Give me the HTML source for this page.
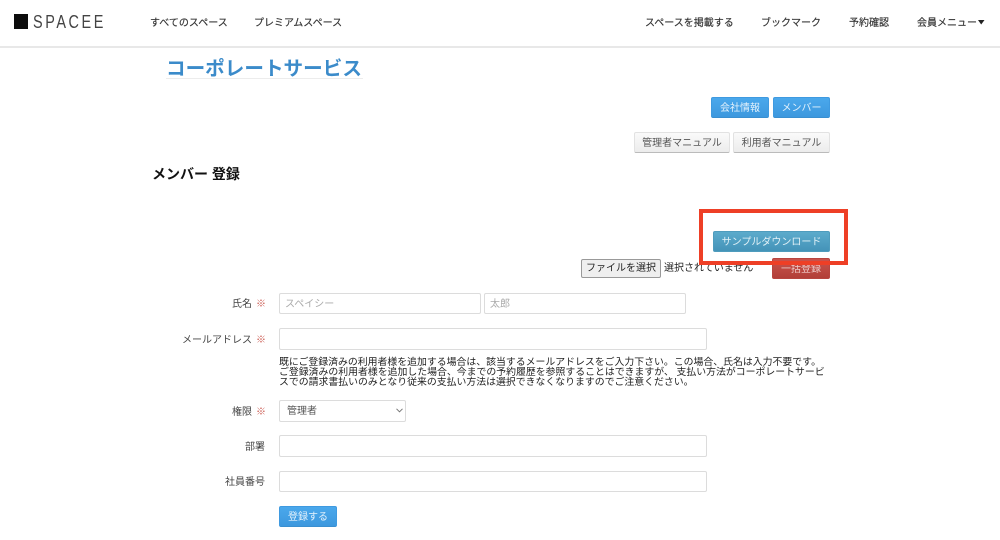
<!DOCTYPE html>
<html lang="ja">
<head>
<meta charset="utf-8">
<title>SPACEE</title>
<style>
html,body{margin:0;padding:0;background:#fff}
body{width:1000px;height:540px;position:relative;overflow:hidden;font-family:"Liberation Sans","Noto Sans CJK JP",sans-serif;color:#333;font-size:10px}
.a{position:absolute;white-space:nowrap}
.nav{top:17px;font-size:10px;line-height:14px;color:#333;-webkit-text-stroke:.15px #333}
.btn{position:absolute;box-sizing:border-box;text-align:center;border-radius:2px;font-size:10px;white-space:nowrap}
.blue{background:linear-gradient(#4aa8ec,#3d98de);color:#e4f2fc;border:1px solid #3f9ae0;border-bottom-color:#3a8fd0}
.gray{background:linear-gradient(#fafafa,#ececec);color:#555;border:1px solid #e2e2e2;border-bottom-color:#bbb}
.inp{position:absolute;box-sizing:border-box;background:#fff;border:1px solid #dcdcdc;border-radius:2px;color:#aaa;font-size:10px;padding-left:5px;white-space:nowrap}
.lab{position:absolute;text-align:right;right:735px;font-size:10px;line-height:14px;color:#444;white-space:nowrap}
.req{position:absolute;left:256px;font-size:10px;line-height:14px;color:#c9554c}
</style>
</head>
<body>
<div class="a" style="left:14px;top:14px;width:14px;height:15px;background:#0c0c0c"></div>
<div class="a" style="left:33px;top:11px;font-size:18.5px;line-height:22px;letter-spacing:3.3px;color:#444;transform:scaleX(.78);transform-origin:0 0">SPACEE</div>
<div class="a nav" style="left:150px">すべてのスペース</div>
<div class="a nav" style="left:254px">プレミアムスペース</div>
<div class="a nav" style="left:645px">スペースを掲載する</div>
<div class="a nav" style="left:761px">ブックマーク</div>
<div class="a nav" style="left:849px">予約確認</div>
<div class="a nav" style="left:917px">会員メニュー</div>
<svg class="a" style="left:978px;top:20px" width="7" height="5" viewBox="0 0 7 5"><path d="M0 0H6.5L3.2 4.5Z" fill="#222"/></svg>
<div class="a" style="left:0;top:46px;width:1000px;height:2px;background:#e8e8e8"></div>

<div class="a" style="left:166px;top:57px;font-size:19.6px;line-height:24px;font-weight:bold;color:#3b8bca">コーポレートサービス</div>
<div class="a" style="left:166px;top:78px;width:197px;height:1px;background:#ececec"></div>

<div class="btn blue" style="left:711px;top:97px;width:58px;height:21px;line-height:21px">会社情報</div>
<div class="btn blue" style="left:773px;top:97px;width:57px;height:21px;line-height:21px">メンバー</div>
<div class="btn gray" style="left:634px;top:132px;width:96px;height:21px;line-height:21px">管理者マニュアル</div>
<div class="btn gray" style="left:733px;top:132px;width:97px;height:21px;line-height:21px">利用者マニュアル</div>

<div class="a" style="left:152px;top:165px;font-size:14px;line-height:18px;font-weight:bold;color:#111">メンバー 登録</div>

<div class="btn" style="left:713px;top:231px;width:117px;height:21px;line-height:21px;background:linear-gradient(#5cabcc,#4493b8);color:#e2f1f7;border:1px solid #4f9cbd">サンプルダウンロード</div>
<div class="btn" style="left:772px;top:258px;width:58px;height:21px;line-height:21px;background:linear-gradient(#c9534c,#b23f39);color:#eec9c6;border:1px solid #b8453f">一括登録</div>
<div class="a" style="left:581px;top:259px;width:80px;height:19px;box-sizing:border-box;border:1px solid #999;border-radius:2px;background:#efefef;text-align:center;font-size:10px;line-height:18px;color:#222">ファイルを選択</div>
<div class="a" style="left:664px;top:262px;font-size:10px;line-height:14px;color:#222">選択されていません</div>
<div class="a" style="left:699px;top:209px;width:149px;height:56px;box-sizing:border-box;border:4px solid #ee3f26"></div>

<div class="lab" style="top:298px;right:748px">氏名</div><div class="req" style="top:298px">※</div>
<div class="inp" style="left:279px;top:293px;width:202px;height:21px;line-height:21px">スペイシー</div>
<div class="inp" style="left:484px;top:293px;width:202px;height:21px;line-height:21px">太郎</div>

<div class="lab" style="top:334px;right:748px">メールアドレス</div><div class="req" style="top:334px">※</div>
<div class="inp" style="left:279px;top:328px;width:428px;height:22px"></div>

<div class="a" style="left:279px;top:358px;font-size:9.9px;line-height:10px;color:#222">既にご登録済みの利用者様を追加する場合は、該当するメールアドレスをご入力下さい。この場合、氏名は入力不要です。<br>ご登録済みの利用者様を追加した場合、今までの予約履歴を参照することはできますが、 支払い方法がコーポレートサービ<br>スでの請求書払いのみとなり従来の支払い方法は選択できなくなりますのでご注意ください。</div>

<div class="lab" style="top:406px;right:748px">権限</div><div class="req" style="top:406px">※</div>
<div class="inp" style="left:279px;top:400px;width:127px;height:22px;line-height:21px;color:#555;padding-left:7px">管理者</div>
<svg class="a" style="left:396px;top:408px" width="7" height="5" viewBox="0 0 7 5"><path d="M.5 .8L3.5 3.8L6.5 .8" fill="none" stroke="#777" stroke-width="1"/></svg>

<div class="lab" style="top:441px">部署</div>
<div class="inp" style="left:279px;top:435px;width:428px;height:22px"></div>

<div class="lab" style="top:476px">社員番号</div>
<div class="inp" style="left:279px;top:471px;width:428px;height:21px"></div>

<div class="btn blue" style="left:279px;top:506px;width:58px;height:21px;line-height:21px">登録する</div>
</body>
</html>
